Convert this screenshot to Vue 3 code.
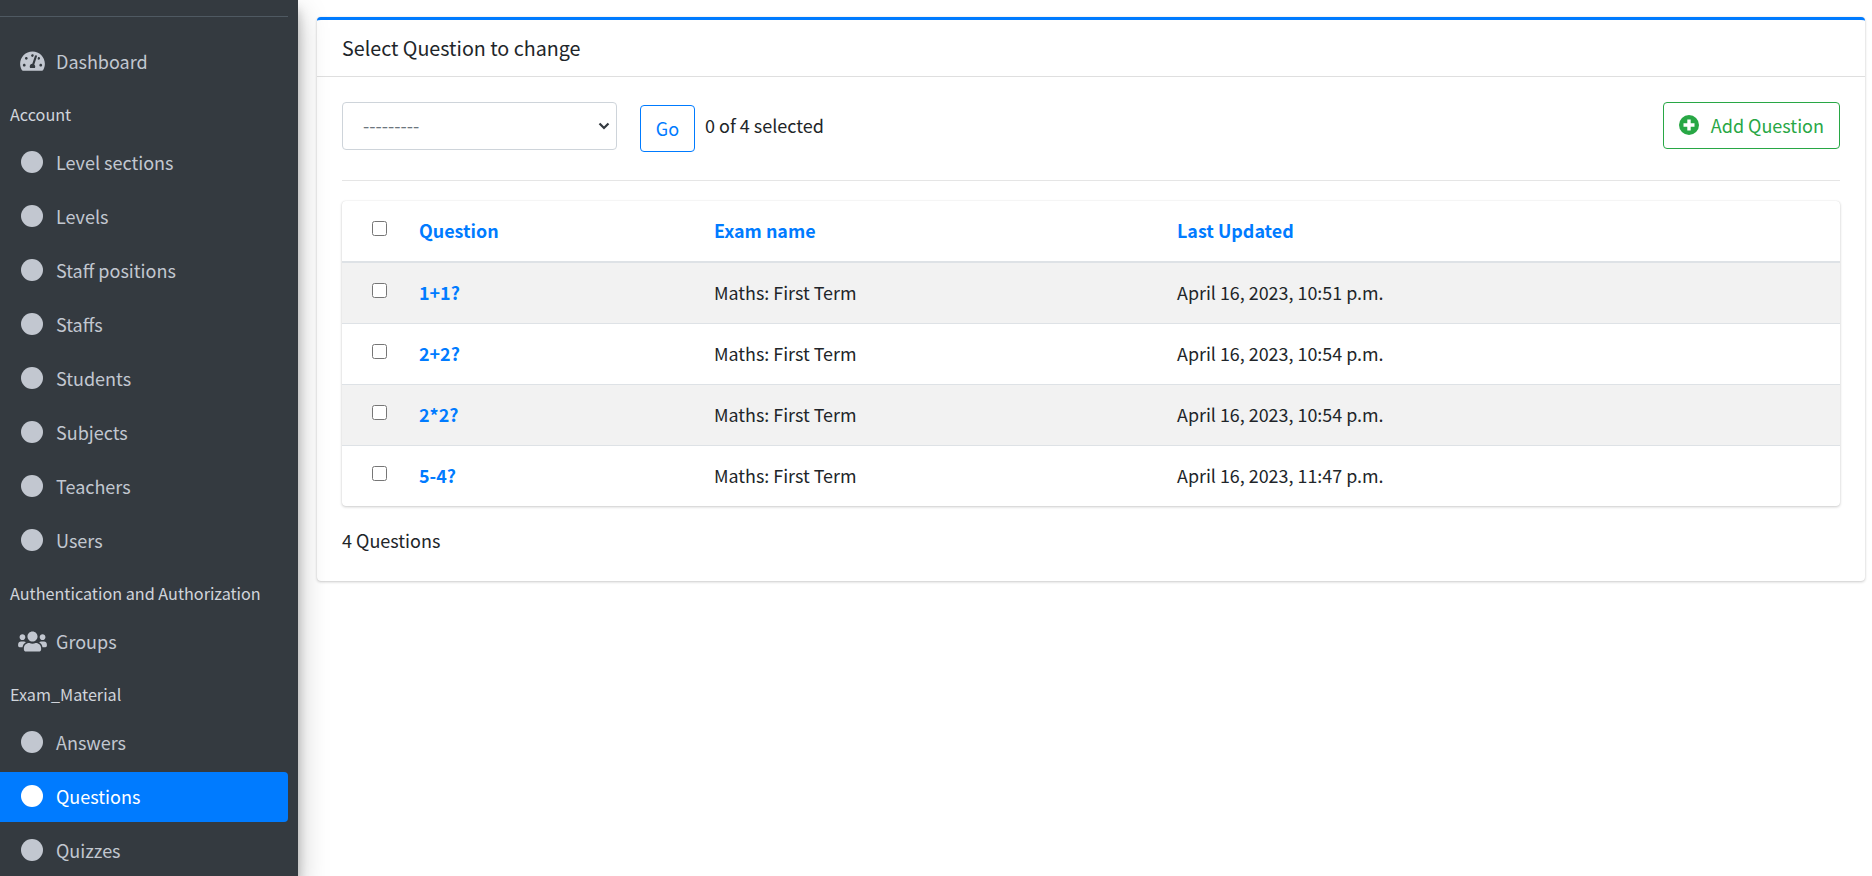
<script setup>
import { ref } from 'vue'

const account = ['Level sections', 'Levels', 'Staff positions', 'Staffs', 'Students', 'Subjects', 'Teachers', 'Users']
const exam = ['Answers', 'Questions', 'Quizzes']

const questions = ref([
  { title: '1+1?', exam: 'Maths: First Term', updated: 'April 16, 2023, 10:51 p.m.' },
  { title: '2+2?', exam: 'Maths: First Term', updated: 'April 16, 2023, 10:54 p.m.' },
  { title: '2*2?', exam: 'Maths: First Term', updated: 'April 16, 2023, 10:54 p.m.' },
  { title: '5-4?', exam: 'Maths: First Term', updated: 'April 16, 2023, 11:47 p.m.' },
])
</script>

<template>
  <div class="page">
    <aside class="sidebar">
      <nav class="nav">
        <a class="nav-link">
          <span class="nav-icon">
            <svg class="icon-gauge" width="25" height="22" viewBox="0 0 576 512" fill="currentColor">
              <path d="M288 32C128.94 32 0 160.94 0 320c0 52.8 14.25 102.26 39.06 144.8 5.61 9.62 16.3 15.2 27.44 15.2h443c11.14 0 21.83-5.58 27.44-15.2C561.75 422.26 576 372.8 576 320c0-159.06-128.94-288-288-288zm0 64c14.71 0 26.58 10.13 30.32 23.65-1.11 2.26-2.64 4.23-3.45 6.67l-9.22 27.67c-5.13 3.49-10.97 6.01-17.64 6.01-17.67 0-32-14.33-32-32S270.33 96 288 96zM96 384c-17.67 0-32-14.33-32-32s14.33-32 32-32 32 14.33 32 32-14.33 32-32 32zm48-160c-17.67 0-32-14.33-32-32s14.33-32 32-32 32 14.33 32 32-14.33 32-32 32zm246.77-72.41l-61.33 184C343.13 347.33 352 364.54 352 384c0 11.72-3.38 22.55-8.88 32H232.88c-5.5-9.45-8.88-20.28-8.88-32 0-33.94 26.5-61.43 59.9-63.59l61.34-184.01c4.17-12.56 17.73-19.45 30.36-15.17 12.57 4.19 19.35 17.77 15.17 30.36zm14.66 57.2l15.52-46.55c3.47-1.29 7.13-2.23 11.05-2.23 17.67 0 32 14.33 32 32s-14.33 32-32 32c-11.38-.01-20.89-6.28-26.57-15.22zM480 384c-17.67 0-32-14.33-32-32s14.33-32 32-32 32 14.33 32 32-14.33 32-32 32z" />
            </svg>
          </span>
          Dashboard
        </a>

        <div class="nav-header">Account</div>
        <a v-for="name in account" :key="name" class="nav-link">
          <span class="nav-icon"><span class="dot"></span></span>
          {{ name }}
        </a>

        <div class="nav-header">Authentication and Authorization</div>
        <a class="nav-link">
          <span class="nav-icon">
            <svg class="icon-users" width="29" height="23" viewBox="0 0 640 512" fill="currentColor">
              <path d="M96 224c35.3 0 64-28.7 64-64s-28.7-64-64-64-64 28.7-64 64 28.7 64 64 64zm448 0c35.3 0 64-28.7 64-64s-28.7-64-64-64-64 28.7-64 64 28.7 64 64 64zm32 32h-64c-17.6 0-33.5 7.1-45.1 18.6 40.3 22.1 68.9 62 75.1 109.4h66c17.7 0 32-14.3 32-32v-32c0-35.3-28.7-64-64-64zm-256 0c61.9 0 112-50.1 112-112S381.9 32 320 32 208 82.1 208 144s50.1 112 112 112zm76.8 32h-8.3c-20.8 10-43.9 16-68.5 16s-47.6-6-68.5-16h-8.3C179.6 288 128 339.6 128 403.2V432c0 26.5 21.5 48 48 48h288c26.5 0 48-21.5 48-48v-28.8c0-63.6-51.6-115.2-115.2-115.2zm-223.7-13.4C161.5 263.1 145.6 256 128 256H64c-35.3 0-64 28.7-64 64v32c0 17.7 14.3 32 32 32h65.9c6.3-47.4 34.9-87.3 75.2-109.4z" />
            </svg>
          </span>
          Groups
        </a>

        <div class="nav-header">Exam_Material</div>
        <a v-for="name in exam" :key="name" :class="['nav-link', { active: name === 'Questions' }]">
          <span class="nav-icon"><span class="dot"></span></span>
          {{ name }}
        </a>
      </nav>
    </aside>

    <main class="content">
      <section class="card">
        <header class="card-header">Select Question to change</header>

        <div class="card-body">
          <div class="actions">
            <select class="action-select">
              <option>---------</option>
            </select>
            <button class="btn-go">Go</button>
            <span class="counter">0 of 4 selected</span>
            <a class="btn-add">
              <svg width="20" height="20" viewBox="0 0 20 20">
                <circle cx="10" cy="10" r="10" fill="#28a745" />
                <path d="M8.3 4.5h3.4v3.8h3.8v3.4h-3.8v3.8H8.3v-3.8H4.5V8.3h3.8z" fill="#fff" />
              </svg>
              Add Question
            </a>
          </div>

          <hr class="divider" />

          <div class="table-wrap">
            <table class="result-list">
              <thead>
                <tr>
                  <th class="col-check"><input type="checkbox" /></th>
                  <th class="col-question"><a>Question</a></th>
                  <th class="col-exam"><a>Exam name</a></th>
                  <th><a>Last Updated</a></th>
                </tr>
              </thead>
              <tbody>
                <tr v-for="q in questions" :key="q.title">
                  <td class="col-check"><input type="checkbox" /></td>
                  <td class="title-cell"><a>{{ q.title }}</a></td>
                  <td>{{ q.exam }}</td>
                  <td>{{ q.updated }}</td>
                </tr>
              </tbody>
            </table>
          </div>

          <p class="paginator">4 Questions</p>
        </div>
      </section>
    </main>
  </div>
</template>

<style>
html,
body {
  margin: 0;
  height: 100%;
  overflow: hidden;
  background: #fff;
}
</style>

<style scoped>
.page {
  display: flex;
  height: 876px;
  overflow: hidden;
  font-family: "Noto Sans CJK SC", "Noto Sans", sans-serif;
  font-size: 18px;
  line-height: 24px;
  color: #212529;
}

.sidebar {
  flex: 0 0 298px;
  height: 876px;
  box-sizing: border-box;
  overflow: hidden;
  background: #343a40;
  box-shadow: 0 14px 28px rgba(0, 0, 0, 0.25), 0 10px 10px rgba(0, 0, 0, 0.22);
  position: relative;
  z-index: 2;
}

.nav {
  width: 288px;
  margin-top: 16px;
  padding-top: 20px;
  border-top: 1px solid #4f5962;
}

.nav-link {
  display: flex;
  align-items: center;
  height: 50px;
  box-sizing: border-box;
  padding-bottom: 2px;
  margin-bottom: 4px;
  border-radius: 0 4px 4px 0;
  color: #c2c7d0;
}

.nav-link.active {
  background: #007bff;
  color: #fff;
}

.nav-icon {
  flex: 0 0 56px;
  display: flex;
  padding-left: 21px;
  box-sizing: border-box;
}

.icon-gauge {
  margin-left: -1px;
}

.icon-users {
  margin-left: -3px;
}

.dot {
  width: 22px;
  height: 22px;
  border-radius: 50%;
  background: currentColor;
}

.nav-header {
  height: 47px;
  box-sizing: border-box;
  padding: 11px 0 12px 10px;
  font-size: 16.2px;
  color: #d0d4db;
  white-space: nowrap;
}

.content {
  flex: 1;
  min-width: 0;
  padding: 17px 7px 0 19px;
}

.card {
  border-top: 3px solid #007bff;
  border-radius: 4px;
  background: #fff;
  box-shadow: 0 0 1px rgba(0, 0, 0, 0.125), 0 1px 3px rgba(0, 0, 0, 0.2);
}

.card-header {
  height: 57px;
  box-sizing: border-box;
  padding: 16px 25px 0;
  font-size: 19.7px;
  border-bottom: 1px solid rgba(0, 0, 0, 0.125);
}

.card-body {
  padding: 25px 25px 0;
}

.actions {
  display: flex;
  align-items: flex-start;
}

.action-select {
  width: 275px;
  height: 48px;
  padding: 0 20px 2px;
  border: 1px solid #ced4da;
  border-radius: 4px;
  font: inherit;
  color: #6c757d;
  appearance: none;
  background: #fff url("data:image/svg+xml,%3csvg xmlns='http://www.w3.org/2000/svg' viewBox='0 0 4 5'%3e%3cpath fill='none' stroke='%23343a40' stroke-width='.8' d='M.4 1.6 2 3.2 3.6 1.6'/%3e%3c/svg%3e") no-repeat right 5px center / 14px 14px;
}

.btn-go {
  width: 55px;
  height: 47px;
  margin: 3px 0 0 23px;
  padding: 0 0 2px;
  border: 1px solid #007bff;
  border-radius: 4px;
  background: #fff;
  color: #007bff;
  font: inherit;
}

.counter {
  margin: 11px 0 0 10px;
}

.btn-add {
  display: flex;
  align-items: center;
  gap: 12px;
  height: 47px;
  margin-left: auto;
  padding: 0 15px 1px;
  box-sizing: border-box;
  border: 1px solid #28a745;
  border-radius: 4px;
  color: #28a745;
}

.divider {
  margin: 28px 0 20px;
  border: 0;
  border-top: 1px solid rgba(0, 0, 0, 0.1);
}

.table-wrap {
  border-radius: 4px;
  overflow: hidden;
  box-shadow: 0 0 1px rgba(0, 0, 0, 0.125), 0 1px 3px rgba(0, 0, 0, 0.2);
}

.result-list {
  width: 100%;
  border-collapse: collapse;
  table-layout: fixed;
  font-size: 17.9px;
}

.result-list th {
  height: 61px;
  padding: 0 12px 2px;
  box-sizing: border-box;
  text-align: left;
  font-weight: 700;
  border-bottom: 2px solid #dee2e6;
}

.result-list a {
  color: #007bff;
  font-weight: 700;
}

.result-list td {
  height: 61px;
  padding: 0 12px 1px;
  box-sizing: border-box;
  border-top: 1px solid #dee2e6;
}

.result-list thead + tbody tr:first-child td {
  border-top: 0;
}

.result-list tbody tr:nth-child(odd) {
  background: #f2f2f2;
}

.col-check {
  width: 65px;
}

.col-check input {
  display: block;
  width: 15px;
  height: 15px;
  margin: -3px 0 0 18px;
}

.col-question {
  width: 295px;
}

.col-exam {
  width: 463px;
}

.paginator {
  margin: 0;
  padding: 22px 0 29px;
}
</style>
